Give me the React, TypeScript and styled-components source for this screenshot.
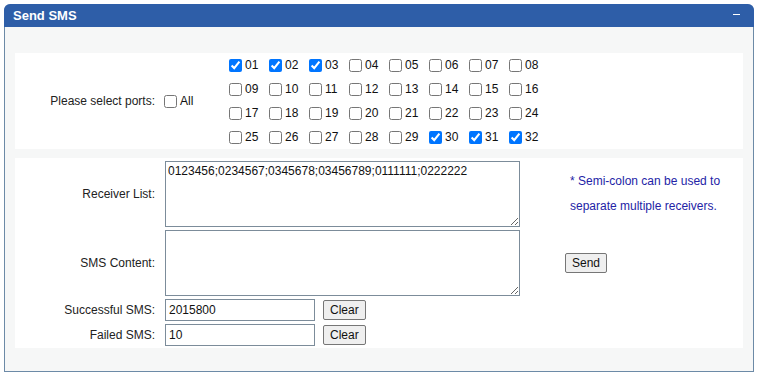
import React from "react";
import styled, { createGlobalStyle } from "styled-components";

const GlobalStyle = createGlobalStyle`
  body {
    margin: 4px;
    background: #ffffff;
    font-family: "Liberation Sans", Arial, sans-serif;
    font-size: 12px;
    color: #222;
  }
`;

const Panel = styled.section`
  border: 1px solid #6c8aa7;
  border-top: none;
  border-radius: 7px 7px 0 0;
  background: #f6f7f7;
  height: 368px;
  box-sizing: border-box;
`;

const Header = styled.header`
  height: 23px;
  background: #2e5ea8;
  border-radius: 6px 6px 0 0;
  margin: 0 -1px;
  display: flex;
  align-items: center;
  justify-content: space-between;
  padding: 0 14px 0 9px;
  color: #fff;
  font-weight: bold;
  font-size: 13px;
`;

const Collapse = styled.span`
  display: block;
  width: 7px;
  height: 1px;
  background: #fff;
  margin-top: -2px;
`;

const Body = styled.div`
  padding: 26px 10px 0 10px;
  display: flex;
  flex-direction: column;
  gap: 9px;
`;

const PortsTable = styled.div`
  background: #fff;
  display: grid;
  grid-template-columns: 145px 65px 1fr;
  align-items: center;
  height: 96px;
`;

const Label = styled.div`
  text-align: right;
  padding-right: 5px;
  color: #222;
`;

const PortGrid = styled.div`
  display: grid;
  grid-template-columns: repeat(8, 40px);
  grid-auto-rows: 24px;
  align-items: center;
`;

const Check = styled.label`
  display: flex;
  align-items: center;
  color: #111;
  input {
    margin: 0 3px 0 4px;
    width: 13px;
    height: 13px;
  }
`;

const FormTable = styled.div`
  background: #fff;
  display: grid;
  grid-template-columns: 145px 400px 1fr;
  grid-template-rows: 66px 66px 22px 22px;
  row-gap: 3px;
  padding: 3px 0 2px;
  align-items: center;
`;

const Area = styled.textarea`
  width: 355px;
  height: 66px;
  box-sizing: border-box;
  margin: 0 0 0 5px;
  padding: 2px;
  border: 1px solid #7c8c9a;
  font-family: "Liberation Sans", Arial, sans-serif;
  font-size: 12px;
  color: #111;
  display: block;
`;

const FieldRow = styled.div`
  display: flex;
  align-items: center;
  gap: 8px;
  padding-left: 5px;
`;

const TextInput = styled.input`
  width: 150px;
  height: 22px;
  box-sizing: border-box;
  border: 1px solid #7c8c9a;
  padding: 1px 3px;
  font-family: "Liberation Sans", Arial, sans-serif;
  font-size: 12px;
  color: #111;
  margin: 0;
`;

const Button = styled.button`
  font-family: "Liberation Sans", Arial, sans-serif;
  font-size: 12px;
  color: #111;
  background: #efefef;
  border: 1px solid #767676;
  border-radius: 2px;
  height: 20px;
  padding: 0 6px;
  margin: 0;
`;

const Note = styled.div`
  color: #2323a6;
  line-height: 25px;
  padding-left: 10px;
`;

const SendCell = styled.div`
  padding-left: 5px;
`;

const checked = new Set([1, 2, 3, 30, 31, 32]);
const ports = Array.from({ length: 32 }, (_, i) => i + 1);

export default function App() {
  return (
    <>
      <GlobalStyle />
      <Panel>
        <Header>
          <span>Send SMS</span>
          <Collapse />
        </Header>
        <Body>
          <PortsTable>
            <Label>Please select ports:</Label>
            <Check>
              <input type="checkbox" />
              All
            </Check>
            <PortGrid>
              {ports.map((p) => (
                <Check key={p}>
                  <input type="checkbox" defaultChecked={checked.has(p)} />
                  {String(p).padStart(2, "0")}
                </Check>
              ))}
            </PortGrid>
          </PortsTable>
          <FormTable>
            <Label>Receiver List:</Label>
            <Area defaultValue="0123456;0234567;0345678;03456789;0111111;0222222" />
            <Note>
              * Semi-colon can be used to
              <br />
              separate multiple receivers.
            </Note>

            <Label>SMS Content:</Label>
            <Area />
            <SendCell>
              <Button>Send</Button>
            </SendCell>

            <Label>Successful SMS:</Label>
            <FieldRow>
              <TextInput defaultValue="2015800" />
              <Button>Clear</Button>
            </FieldRow>
            <div />

            <Label>Failed SMS:</Label>
            <FieldRow>
              <TextInput defaultValue="10" />
              <Button>Clear</Button>
            </FieldRow>
            <div />
          </FormTable>
        </Body>
      </Panel>
    </>
  );
}
